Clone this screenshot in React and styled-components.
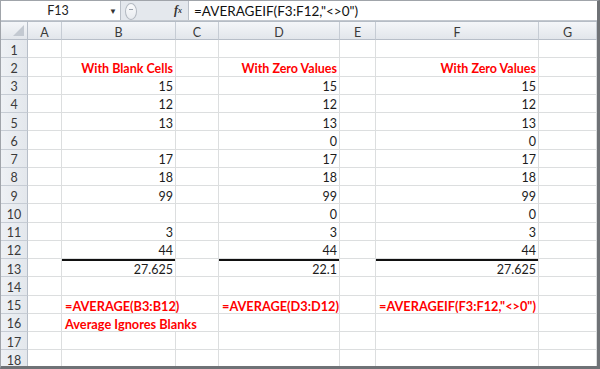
import styled, { createGlobalStyle } from 'styled-components';

const GlobalStyle = createGlobalStyle`
  html, body { margin: 0; padding: 0; background: #fff; }
  body { font-family: 'Lato', 'Liberation Sans', sans-serif; }
`;

const Window = styled.div`
  width: 600px;
  height: 369px;
  box-sizing: border-box;
  border-left: 1px solid #a0a4aa;
  border-top: 1px solid #a0a4aa;
  border-right: 3px solid #6f7276;
  border-bottom: 3px solid #6f7276;
  background: #fff;
  overflow: hidden;
  display: flex;
  flex-direction: column;
`;

const FormulaBar = styled.div`
  height: 19px;
  display: flex;
  background: #e4e8ed;
  border-bottom: 1px solid #c3c8cf;
`;

const NameBox = styled.div`
  width: 119px;
  display: flex;
  align-items: center;
  background: #fff;
  border-right: 1px solid #b9bfc7;
  font-size: 12.5px;
  color: #222;
`;

const NameText = styled.span`
  flex: 1;
  text-align: center;
  padding-left: 6px;
`;

const Arrow = styled.span`
  font-size: 8px;
  color: #333;
  padding-right: 3px;
`;

const Grip = styled.div`
  width: 10px;
  height: 15px;
  margin: 2px 0 0 4px;
  border: 1px solid #b3b9c1;
  border-radius: 50%;
  background: linear-gradient(#fafbfc, #e9ecf0);
  position: relative;

  &::after {
    content: '';
    position: absolute;
    left: 3px;
    top: 5px;
    width: 4px;
    height: 1px;
    background: #9aa2ac;
  }
`;

const FxSlot = styled.div`
  flex: 1;
  display: flex;
  justify-content: flex-end;
  align-items: center;
  padding-right: 6px;
  font-family: 'Liberation Serif', serif;
  font-style: italic;
  font-weight: bold;
  font-size: 12px;
  color: #333;

  sub {
    font-size: 8px;
    vertical-align: -1px;
  }
`;

const FormulaInput = styled.div`
  width: 403px;
  display: flex;
  align-items: center;
  padding-left: 5px;
  background: #fff;
  border-left: 1px solid #b9bfc7;
  font-size: 13.5px;
  color: #111;
  white-space: nowrap;
`;

const Strip = styled.div`
  height: 2px;
  background: #e4e8ed;
  border-bottom: 1px solid #b5bcc5;
`;

const Sheet = styled.div`
  flex: 1;
  display: grid;
  grid-template-columns: 27px 34px 114px 43px 121px 36px 163px 58px;
  grid-template-rows: 18px repeat(18, 18.25px);
  font-size: 12.5px;
  color: #1c1c1c;
`;

const Corner = styled.div`
  background: linear-gradient(#f4f6f9, #e2e6eb);
  border-right: 1px solid #b7bec8;
  border-bottom: 1px solid #b7bec8;
  position: relative;

  &::after {
    content: '';
    position: absolute;
    right: 3px;
    bottom: 3px;
    border-left: 11px solid transparent;
    border-bottom: 11px solid #c3c9d1;
  }
`;

const ColHead = styled.div`
  display: flex;
  align-items: center;
  justify-content: center;
  padding-top: 3px;
  box-sizing: border-box;
  background: linear-gradient(#f4f6f9, #e2e6eb);
  border-right: 1px solid #c6ccd4;
  border-bottom: 1px solid #b7bec8;
  color: #3a3a3a;
  font-size: 12.5px;
`;

const RowHead = styled.div`
  display: flex;
  align-items: center;
  justify-content: center;
  padding-top: 3px;
  box-sizing: border-box;
  background: linear-gradient(90deg, #eef1f5, #e3e7ec);
  border-right: 1px solid #b7bec8;
  border-bottom: 1px solid #c6ccd4;
  color: #3a3a3a;
  font-size: 12.5px;
`;

const Cell = styled.div`
  box-sizing: border-box;
  display: flex;
  align-items: center;
  justify-content: ${p => (p.$align === 'left' ? 'flex-start' : 'flex-end')};
  padding: 3px 2px 0 3px;
  border-right: ${p => (p.$spill ? 'none' : '1px solid #dcdedf')};
  border-bottom: 1px solid #dcdedf;
  white-space: nowrap;
  overflow: visible;
  font-size: ${p => (p.$align === 'left' ? '12.75px' : '12.5px')};
  color: ${p => (p.$red ? '#ff0000' : '#1c1c1c')};
  font-weight: ${p => (p.$red ? 700 : 400)};
  box-shadow: ${p => (p.$rule ? 'inset 0 2px 0 #111' : 'none')};
`;

const COLS = ['A', 'B', 'C', 'D', 'E', 'F', 'G'];

const head = v => ({ v, red: true });
const fx = v => ({ v, red: true, align: 'left' });
const num = v => (v === '' ? null : { v });

const blanks = [15, 12, 13, '', 17, 18, 99, '', 3, 44];
const zeros = [15, 12, 13, 0, 17, 18, 99, 0, 3, 44];

const rows = [
  [],
  [null, head('With Blank Cells'), null, head('With Zero Values'), null, head('With Zero Values')],
  ...blanks.map((b, i) => [null, num(b), null, num(zeros[i]), null, num(zeros[i])]),
  [null, { v: '27.625', rule: true }, null, { v: '22.1', rule: true }, null, { v: '27.625', rule: true }],
  [],
  [null, fx('=AVERAGE(B3:B12)'), null, fx('=AVERAGE(D3:D12)'), null, fx('=AVERAGEIF(F3:F12,"<>0")')],
  [null, { ...fx('Average Ignores Blanks'), spill: true }],
  [],
  [],
];

export default function App() {
  return (
    <>
      <GlobalStyle />
      <Window>
        <FormulaBar>
          <NameBox>
            <NameText>F13</NameText>
            <Arrow>▼</Arrow>
          </NameBox>
          <Grip />
          <FxSlot>
            f<sub>x</sub>
          </FxSlot>
          <FormulaInput>=AVERAGEIF(F3:F12,"&lt;&gt;0")</FormulaInput>
        </FormulaBar>
        <Strip />
        <Sheet>
          <Corner />
          {COLS.map(c => (
            <ColHead key={c}>{c}</ColHead>
          ))}
          {rows.map((row, r) => [
            <RowHead key={`h${r}`}>{r + 1}</RowHead>,
            ...COLS.map((c, ci) => {
              const cell = row[ci];
              return (
                <Cell
                  key={`${c}${r}`}
                  $align={cell?.align}
                  $red={cell?.red}
                  $rule={cell?.rule}
                  $spill={cell?.spill}
                >
                  {cell?.v}
                </Cell>
              );
            }),
          ])}
        </Sheet>
      </Window>
    </>
  );
}
